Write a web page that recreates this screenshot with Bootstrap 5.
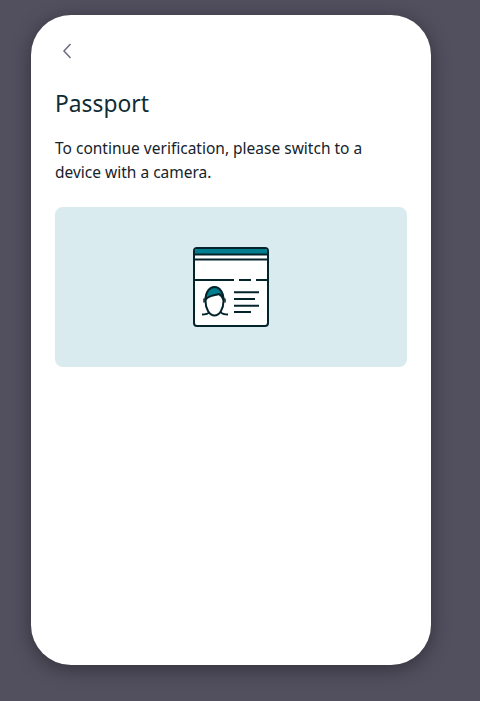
<!DOCTYPE html>
<html lang="en">
<head>
  <meta charset="UTF-8">
  <meta name="viewport" content="width=device-width, initial-scale=1.0">
  <title>Passport</title>
  <link href="https://cdn.jsdelivr.net/npm/bootstrap@5.3.0/dist/css/bootstrap.min.css" rel="stylesheet">
  <style>
    body {
      background: #52505f;
      font-family: "Noto Sans", "Open Sans", sans-serif;
      height: 701px;
      overflow: hidden;
    }
    .page-wrap {
      padding: 15px 49px 36px 31px;
    }
    .phone-card {
      width: 400px;
      height: 650px;
      background: #fff;
      border-radius: 40px;
      box-shadow: 0 4px 20px rgba(0,0,0,0.4);
      padding: 24px;
    }
    .back-btn {
      width: 24px;
      height: 24px;
      color: #6c6a80;
      margin-bottom: 27px;
    }
    .title-text {
      color: #0f2b33;
      font-size: 22.800px;
      line-height: 28px;
      font-weight: 400;
      margin-bottom: 18px;
    }
    .body-text {
      color: #16232b;
      font-size: 15.500px;
      line-height: 24px;
      margin-bottom: 23px;
    }
    .hero-panel {
      height: 160px;
      background: #d9ebef;
      border-radius: 8px;
    }
  </style>
</head>
<body>
  <div class="page-wrap">
    <div class="phone-card">
      <a class="back-btn d-flex align-items-center justify-content-center" href="#" aria-label="Back">
        <svg width="24" height="24" viewBox="0 0 24 24" fill="none" stroke="currentColor" stroke-width="1.5">
          <path d="M15.500 5l-6.500 7 6.500 7"/>
        </svg>
      </a>
      <h1 class="title-text">Passport</h1>
      <p class="body-text">To continue verification, please switch to a device with a camera.</p>
      <div class="hero-panel d-flex align-items-center justify-content-center">
        <svg width="76" height="80" viewBox="0 0 76 80" fill="none" stroke="#04242c" stroke-width="2">
          <rect x="1" y="1" width="74" height="78" rx="3" fill="#fff"/>
          <path d="M2 7V3.500A1.500 1.500 0 0 1 3.500 2h69A1.500 1.500 0 0 1 74 3.500V7z" fill="#007e8f" stroke="none"/>
          <path d="M1 7.500h74M1 12.500h74"/>
          <path d="M1 33h40M46 33h12M63 33h12"/>
          <path d="M12.500 54c0-8 4-13.500 9-13.500s9 5.500 9 13.500-4 14.500-9 14.500-9-6.500-9-14.500z" fill="#fff"/>
          <path d="M12.500 53c0-8 4-13 9-13s9 5 9 13c-1-3-2.500-5-4.500-6-4 1.500-11 1-13.500 6z" fill="#007e8f"/>
          <path d="M11 51.500v4M32 51.500v4" stroke-width="1.500"/>
          <path d="M9 67.500c4 0 6-.5 7.500-2.500M35 67.500c-4 0-6-.5-7.500-2.500"/>
          <path d="M41 45.300h25M41 52h21M41 58.700h25M41 65h17"/>
        </svg>
      </div>
    </div>
  </div>
  <script src="https://cdn.jsdelivr.net/npm/bootstrap@5.3.0/dist/js/bootstrap.bundle.min.js"></script>
</body>
</html>
